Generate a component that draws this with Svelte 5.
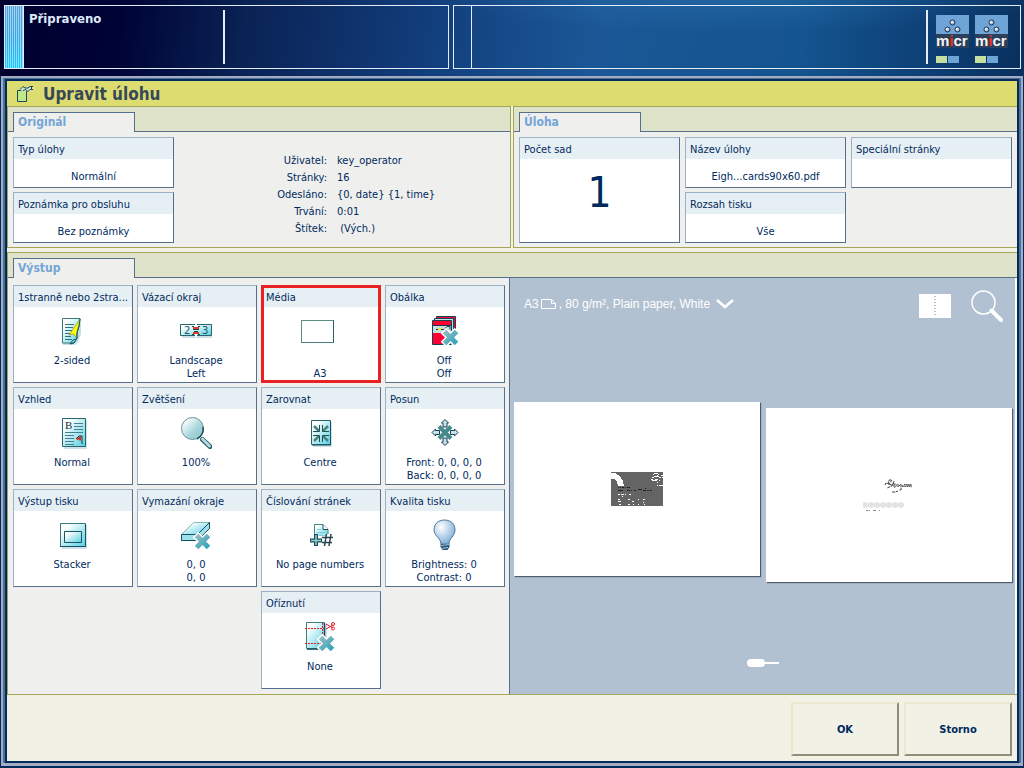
<script>
//     Job data
// =======================
   const details = [
      ["Uživatel:", "key_operator"],
      ["Stránky:", "16"],
      ["Odesláno:", "{0, date} {1, time}"],
      ["Trvání:", "0:01"],
      ["Štítek:", " (Vých.)"],
   ];

   const outputs = [
      { id: "sided", title: "1stranně nebo 2stranně", lines: ["2-sided"] },
      { id: "binding", title: "Vázací okraj", lines: ["Landscape", "Left"] },
      { id: "media", title: "Média", lines: ["", "A3"] },
      { id: "cover", title: "Obálka", lines: ["Off", "Off"] },
      { id: "layout", title: "Vzhled", lines: ["Normal"] },
      { id: "zoom", title: "Zvětšení", lines: ["100%"] },
      { id: "align", title: "Zarovnat", lines: ["Centre"] },
      { id: "shift", title: "Posun", lines: ["Front: 0, 0, 0, 0", "Back: 0, 0, 0, 0"] },
      { id: "stacker", title: "Výstup tisku", lines: ["Stacker"] },
      { id: "erase", title: "Vymazání okraje", lines: ["0, 0", "0, 0"] },
      { id: "numbers", title: "Číslování stránek", lines: ["No page numbers"] },
      { id: "quality", title: "Kvalita tisku", lines: ["Brightness: 0", "Contrast: 0"] },
      { id: "trim", title: "Oříznutí", lines: ["None"] },
   ];

   // the title bar cuts long names after this many characters
   const maxTitle = 19;
   const shorten = (title) => title.length > maxTitle ? title.slice(0, maxTitle) + "..." : title;

   let selected = $state("media");
   let spread = $state(0);
</script>

<!-- the grey-green cross over icons of switched off options -->
{#snippet cross()}
   <path d="M15.500 15.500l14 14M29.500 15.500l-14 14" stroke="#fff" stroke-width="8" />
   <path d="M16.500 16.500l12 12M28.500 16.500l-12 12" stroke="url(#crossFill)" stroke-width="5" />
{/snippet}

{#snippet icon(id)}
   <svg class="icon" viewBox="0 0 32 32" width="32" height="32" fill="none" aria-hidden="true">
      {#if id == "sided"}
         <path d="M7 4h18v15l-3 8-3 3H7z" fill="#c5dfe8" />
         <path d="M6.500 3.500h17.500l-3 15v5l-3 4.500H6.500z" fill="url(#paper)" stroke="#3e7774" />
         <path d="M9 9.500h9M9 12.500h8M9 15.500h7M9 18.500h5M9 21.500h6M9 24.500h7" stroke="#3a6f7c" />
         <path d="M24 4L13 20l4-1 3 3 1-5z" fill="#ff0" stroke="#8e8b28" stroke-width=".7" />
         <path d="M24 4l-1 8-2 6v5l-3 5-4 1 3-4 3-1" stroke="#165b68" />
      {:else if id == "binding"}
         <path d="M2 11h31v12H2z" fill="#cddfe6" />
         <path d="M.5 9.500h31v11H.5z" fill="url(#paper)" stroke="#28646c" />
         <path d="M16 9v2M16 19v3" stroke="#fff" stroke-width="2" />
         <text x="4" y="19" class="digits">2</text>
         <text x="22" y="19" class="digits">3</text>
         <path d="M13 13h6M13 18h6" stroke="#e33828" stroke-width="2" />
         <path d="M12 11.500h2M18 11.500h2M13 14.500h6M14 16.500h4M12 19.500h2M18 19.500h2" stroke="#174b58" />
      {:else if id == "cover"}
         <path d="M8.500 1.500h19v26h-19z" fill="#ff0034" stroke="#124454" />
         <path d="M6.500 3.500h19v24h-19z" fill="#b8e3ea" stroke="#124454" />
         <path d="M4.500 5.500h19v24h-19z" fill="#ff0034" stroke="#124454" />
         <path d="M5 11h18v7H5z" fill="#c8dde0" />
         <path d="M8 14.500h8M17 13.500l2-2h3v3M5 10.500h18" stroke="#153f4a" />
         <path d="M10 14h3" stroke="#f2e726" stroke-width="2" />
         {@render cross()}
      {:else if id == "layout"}
         <path d="M8 3h23v29H8z" fill="#cfe2ea" />
         <path d="M6.500 1.500h23v28h-23z" fill="url(#paper)" stroke="#28646c" />
         <text x="9" y="12" class="serif">B</text>
         <path d="M18 6.500h9M18 9.500h9M18 12.500h9M9 15.500h18M9 18.500h9M9 21.500h9M9 24.500h9M9 27.500h9" stroke="#47818d" />
         <path d="M20 22l3-3h3v8" stroke="#143640" />
         <path d="M21 22.500l3-2v3" stroke="#e22a20" stroke-width="2" />
      {:else if id == "zoom"}
         <circle cx="12.500" cy="11.500" r="11" fill="url(#lens)" stroke="#6b9299" />
         <path d="M17 22a11 11 0 0 0 6-12" stroke="#174b5b" stroke-width="1.500" />
         <path d="M22.500 22.500l7.500 7" stroke="#255f68" stroke-width="5" stroke-linecap="round" />
         <path d="M22.500 22l7 7" stroke="#b6dbdf" stroke-width="3" stroke-linecap="round" />
      {:else if id == "align"}
         <path d="M9 5h19v25H9z" fill="#cfe2ea" />
         <path d="M7.500 3.500h19v24h-19z" fill="url(#paper)" stroke="#28646c" />
         <path d="M26.500 4v24H8" stroke="#15535f" />
         <path d="M10 9l5 5M24 9l-5 5M10 24l5-5M24 24l-5-5" stroke="#4e8477" stroke-width="2.500" />
         <path d="M15.500 8v6.500H9M18.500 8v6.500H25M9 18.500h6.500V25M25 18.500h-6.500V25" stroke="#1b4f5a" />
      {:else if id == "shift"}
         <path d="M11 9.500l12 12M23 9.500l-12 12" stroke="#46898d" stroke-width="4" />
         <path d="M17 2.500l3.500 3.500h-1.500v4h-4v-4h-1.500zM17 28.500l3.500-3.500h-1.500v-4h-4v4h-1.500zM4 15.500l3.500-3.500v1.500h4v4h-4v1.500zM30 15.500l-3.500-3.500v1.500h-4v4h4v1.500z" fill="#c4e2e8" stroke="#193f53" />
      {:else if id == "stacker"}
         <path d="M6 6h25v24H6z" fill="#cfe2ea" />
         <path d="M4.500 4.500h25v23h-25z" fill="url(#paper)" stroke="#3b7776" />
         <path d="M29.500 5v22.500H4" stroke="#155060" />
         <path d="M8.500 12.500h17v11h-17z" fill="url(#paper)" stroke="#1b5362" />
      {:else if id == "erase"}
         <path d="M1.500 15.500l12-12h16v6l-12 12h-16z" fill="#9be0eb" stroke="#3b7776" />
         <path d="M1.500 15.500l12-12h16l-12 12z" fill="url(#paper)" />
         <path d="M1.500 15.500h16l12-12v6l-12 12h-16zM17.500 15.500v6" stroke="#174f5c" />
         {@render cross()}
      {:else if id == "numbers"}
         <path d="M10.500 17V5.500H19l5 5V15" fill="url(#paper)" stroke="#47887f" />
         <path d="M19 5.500v5h5" fill="#fff" stroke="#174f5c" />
         <path d="M13 10.500h4M13 13.500h8M15 16.500h8" stroke="#87cbd6" />
         <path d="M12 15v12M6 21.500h12" stroke="#174f5c" stroke-width="4" />
         <path d="M12 16v10M7 21.500h10" stroke="#9ccdd1" stroke-width="1.500" />
         <path d="M22.500 15l-2 12M27 15l-2 12M18 18.500h11M18 23.500h10" stroke="#28434d" stroke-width="1.500" />
      {:else if id == "quality"}
         <path d="M13 25c0-6-7-8-7-14C6 5 10 1 16.500 1S27 5 27 11c0 6-6 8-6 14z" fill="url(#bulb)" stroke="#52779e" />
         <path d="M12.500 25h9v3l-2 3h-5l-2-3z" fill="#315776" />
         <path d="M13 26.500l8-1M13 29.500l7-1" stroke="#9bc2db" />
      {:else if id == "trim"}
         <path d="M3 3h20v26H3z" fill="#cfe2ea" />
         <path d="M2.500 1.500h18v26h-18z" fill="url(#paper)" stroke="#3c8177" />
         <path d="M20.500 2v26H3" stroke="#155060" stroke-width="1.500" />
         <path d="M1 7.500h19M1 22.500h17M18.500 2v11" stroke="#e41c24" stroke-dasharray="2 1" />
         <path d="M22 3l7 4M22 8l7-4" stroke="#d4243a" />
         <circle cx="29" cy="3" r="1.500" stroke="#e41c24" />
         <circle cx="29" cy="7.500" r="1.500" stroke="#e41c24" />
         {@render cross()}
      {/if}
   </svg>
{/snippet}

{#snippet tab(name)}
   <div class="tabs"><h2>{name}</h2></div>
{/snippet}

{#snippet setting(title, value)}
   <button class="tile">
      <span class="caption">{title}</span>
      <span class="value">{value}</span>
   </button>
{/snippet}

<!-- shared gradients -->
<svg class="defs" width="0" height="0" aria-hidden="true">
   <defs>
      <linearGradient id="paper" x1="0" y1="0" x2="1" y2="1">
         <stop offset=".2" stop-color="#fafefe" />
         <stop offset="1" stop-color="#55cfe2" />
      </linearGradient>
      <linearGradient id="crossFill" gradientUnits="userSpaceOnUse" x1="15" y1="15" x2="29" y2="29">
         <stop offset="0" stop-color="#a2bdc2" />
         <stop offset="1" stop-color="#2ba5b9" />
      </linearGradient>
      <linearGradient id="lens" x1="0" y1="0" x2="1" y2="1">
         <stop offset=".2" stop-color="#f2fafa" />
         <stop offset=".6" stop-color="#a3d4da" />
         <stop offset="1" stop-color="#8fc6ce" />
      </linearGradient>
      <radialGradient id="bulb" cx=".35" cy=".3" r=".8">
         <stop offset="0" stop-color="#fff" />
         <stop offset="1" stop-color="#72a6d2" />
      </radialGradient>
      <radialGradient id="ball" cx=".35" cy=".35" r=".7">
         <stop offset="0" stop-color="#fff" />
         <stop offset="1" stop-color="#8b98a8" />
      </radialGradient>
   </defs>
</svg>

<div class="screen">
   <header class="status">
      <div class="box state">
         <div class="stripes"></div>
         <strong>Připraveno</strong>
         <div class="divider"></div>
      </div>
      <div class="box supplies">
         <div class="slot"></div>
         <div class="divider"></div>
         {#each [1, 2] as n (n)}
            <div class="toner">
               <svg width="33" height="33" viewBox="0 0 33 33">
                  <path d="M0 0h33v33H0z" fill="#6fa4d6" />
                  <path d="M0 19h33v14H0z" fill="#2a405c" />
                  <g fill="url(#ball)" stroke="#123462">
                     <circle cx="16.500" cy="7.500" r="2.500" />
                     <circle cx="11.500" cy="14.500" r="2.500" />
                     <circle cx="21.500" cy="14.500" r="2.500" />
                  </g>
                  <text x="0" y="31" class="micr">m<tspan fill="#ff2a10">i</tspan>cr</text>
               </svg>
               <div class="level"><i></i><i></i></div>
            </div>
         {/each}
      </div>
   </header>

   <div class="frame">
      <main class="window">
         <div class="title">
            <svg width="18" height="18" viewBox="0 0 18 18" fill="none" aria-hidden="true">
               <path d="M1.500 5.500h9v11h-9z" fill="#bfe88c" stroke="#174b5c" />
               <path d="M4 3.500l3-2 2 1h3l2-1 3 1v2l-3 2-2-1-3 1-4-1z" fill="#d5e7c5" />
               <path d="M4 4.500l3-3 2 1.500h3l2-1.500h3M7 5.500l3-1 2 2 2-2h3M15.500 1.500v3" stroke="#17435d" />
            </svg>
            <h1>Upravit úlohu</h1>
         </div>

         <div class="top">
            <section class="panel">
               {@render tab("Originál")}
               <div class="original">
                  <div class="stack">
                     {@render setting("Typ úlohy", "Normální")}
                     {@render setting("Poznámka pro obsluhu", "Bez poznámky")}
                  </div>
                  <dl>
                     {#each details as [name, value] (name)}
                        <dt>{name}</dt>
                        <dd>{value}</dd>
                     {/each}
                  </dl>
               </div>
            </section>

            <section class="panel open">
               {@render tab("Úloha")}
               <div class="job">
                  <button class="tile copies">
                     <span class="caption">Počet sad</span>
                     <span class="value">1</span>
                  </button>
                  {@render setting("Název úlohy", "Eigh...cards90x60.pdf")}
                  {@render setting("Speciální stránky", "")}
                  {@render setting("Rozsah tisku", "Vše")}
               </div>
            </section>
         </div>

         <section class="panel open output">
            {@render tab("Výstup")}
            <div class="outputBody">
               <div class="tiles">
                  {#each outputs as item (item.id)}
                     <button class="tile option {item.id}" class:selected={ selected == item.id } onclick={ () => selected = item.id }>
                        <span class="caption">{shorten(item.title)}</span>
                        {#if item.id == "media"}
                           <span class="icon wide"><span class="sheet"></span></span>
                        {:else}
                           {@render icon(item.id)}
                        {/if}
                        {#each item.lines as line}
                           <span class="line">{line}</span>
                        {/each}
                     </button>
                  {/each}
               </div>

               <div class="preview">
                  <div class="toolbar">
                     <button class="paper">
                        <span>A3</span>
                        <svg width="16" height="12" viewBox="0 0 16 12" fill="none" stroke="#fff">
                           <path d="M.5 1.500h10l4 4v5H.5zM10.500 1.500v4h4" />
                        </svg>
                        <span>, 80 g/m², Plain paper, White</span>
                        <svg width="18" height="12" viewBox="0 0 18 12" fill="none" stroke="#fff" stroke-width="2.500">
                           <path d="M1 2l8 7 8-7" />
                        </svg>
                     </button>
                     <button class="tool" aria-label="Spread">
                        <svg width="32" height="32" viewBox="0 0 32 32">
                           <path d="M0 4h32v24H0z" fill="#fff" />
                           <path d="M16 6v20" stroke="#b1c1d1" stroke-width="2" stroke-dasharray="1 2" />
                        </svg>
                     </button>
                     <button class="tool" aria-label="Zoom">
                        <svg width="32" height="32" viewBox="0 0 32 32" fill="none" stroke="#fff">
                           <circle cx="12.500" cy="12.500" r="11.500" stroke-width="1.500" />
                           <path d="M20.500 20.500l9.500 9.500" stroke-width="4" stroke-linecap="round" />
                        </svg>
                     </button>
                  </div>

                  <div class="pages">
                     <div class="page">
                        <svg width="52" height="36" viewBox="0 0 52 36" shape-rendering="crispEdges">
                           <path d="M0 1h52v34H0z" fill="#646464" />
                           <path d="M0 2h4l5 3 3 5 1 5H7l-1-4-3-3H0z" fill="#fff" />
                           <path d="M43 2.500h4M42 3.500h1M47 3.500h1M43 5.500h5M41 6.500h2M48 6.500h2M40 8.500h2M44 8.500h3M50 4.500h2M51 6.500h1M41 9.500h5M46 11.500h1M46 14.500h1M48 14.500h4M46 4.500h1M48 9.500h1" stroke="#fff" fill="none" />
                           <path d="M7 16.500h1M9 16.500h1M11 16.500h2M14 16.500h1M16 16.500h3M7 19.500h5M16 19.500h3M20 19.500h1M23 19.500h2M27 18.500h4M32 19.500h3M36 19.500h2M39 19.500h2M34 17.500h1" stroke="#222" />
                           <path d="M7 23.500h2M10 23.500h3M14 23.500h1M18 23.500h2M11 25.500h1M7 28.500h2M17 28.500h2M27 28.500h1M7 30.500h3M21 30.500h2M32 28.500h2M8 33.500h2M17 33.500h2M22 33.500h1M27 33.500h1M33 33.500h1M32 31.500h1" stroke="#fff" />
                        </svg>
                     </div>
                     <div class="page back">
                        <svg width="52" height="36" viewBox="0 0 52 36" fill="none">
                           <path d="M22 8l1-2 3 1 3-4h-3l-1 4 4 1 2-2M31 4l-2 5-5 2M30 9c1-3 4-3 3 0s-3 1-1-2M35 7v3l3-3v6h-2M39 8l1 2 2-3v3l2-3v3l2-3v3l2-3v4M29 15h3l3-1" stroke="#444" stroke-dasharray="3 .7" />
                           <g fill="#e3e3e3">
                              {#each [0, 1, 2, 3, 4, 5, 6] as n}
                                 <circle cx={ 2 + n * 6 } cy="28" r="3" />
                              {/each}
                           </g>
                           <path d="M3 33.500h2M6 33.500h1M10 33.500h3M16 33.500h1" stroke="#888" />
                        </svg>
                     </div>
                  </div>

                  <div class="pager">
                     <input type="range" min="0" max="8" aria-label="Pages" bind:value={ spread } />
                  </div>
               </div>
            </div>
         </section>

         <footer>
            <button class="action">OK</button>
            <button class="action">Storno</button>
         </footer>
      </main>
   </div> <!-- end of frame -->
</div>

<style>
   :global(body) {
      margin: 0;
      background: #002b5c;
   }

   .screen {
      box-sizing: border-box;
      min-height: 100vh;
      display: flex;
      flex-direction: column;
      padding-bottom: 2px;
      color: #002a5e;
      font: 11px/13px "DejaVu Sans Condensed", "DejaVu Sans", sans-serif;
   }

   .defs { position: absolute; }

   button {
      font: inherit;
      color: inherit;
      margin: 0;
      padding: 0;
      cursor: pointer;
   }

   h1, h2, dl, dd { margin: 0; }

/* status bar */
   .status {
      box-sizing: border-box;
      height: 76px;
      display: grid;
      grid-template-columns: 445fr 568fr;
      gap: 4px;
      padding: 5px 3px 7px 4px;
      background:
         radial-gradient(ellipse at 72% 0, rgba(60, 140, 200, .25), transparent 30%),
         linear-gradient(98deg, #00002e 0, #000336 12%, #0a2254 24%, #123e7c 42%, #1b5796 58%, #14548f 78%, #0d4076 90%, #09305e 100%);
   }

   .box {
      display: flex;
      border: 1px solid #e4ecf8;
   }

   .state strong {
      flex: 0 0 199px;
      box-sizing: border-box;
      padding: 5px 0 0 5px;
      color: #dfe9fa;
      font-size: 13px;
      line-height: 16px;
   }

   .stripes {
      width: 18px;
      border-right: 1px solid #e4ecf8;
      background:
         repeating-linear-gradient(90deg, transparent 0 1px, rgba(255, 255, 255, .5) 1px 2px),
         linear-gradient(#4fa3dc, #35a8e6 50%, #14c8ff);
   }

   .divider {
      width: 2px;
      margin: 4px 0;
      background: #e4ecf8;
   }

   .supplies { gap: 6px; padding-right: 12px; }
   .supplies .divider { margin-left: auto; margin-right: 2px; }

   .slot {
      width: 17px;
      border-right: 1px solid #e4ecf8;
   }

   .toner { padding-top: 9px; }
   .toner svg { display: block; }

   .micr {
      font: bold 15px "Liberation Sans", sans-serif;
      fill: #f4f4f4;
   }

   .level {
      display: flex;
      gap: 1px;
      margin-top: 8px;
   }

   .level i {
      width: 11px;
      height: 7px;
      background: #6fa4d6;
   }

   .level i:first-child { background: #c4dfa0; }

/* window */
   .frame {
      flex: 1;
      display: flex;
      margin: 0 1px;
      padding: 1px 2px 0;
      border: 2px solid #a3acc2;
      border-bottom-width: 3px;
      background: #4f7096;
   }

   .window {
      flex: 1;
      min-width: 0;
      display: flex;
      flex-direction: column;
      border: 2px solid #002b5c;
      background: #f1f1e5;
   }

   .title {
      display: flex;
      align-items: center;
      gap: 9px;
      height: 25px;
      padding-left: 9px;
      background: #dddc70;
      color: #364858;
   }

   h1 { font-size: 17px; line-height: 24px; }

   .top {
      display: grid;
      grid-template-columns: 504fr 504fr;
      gap: 2px;
      margin-bottom: 4px;
   }

   .panel {
      border: 1px solid #a5a556;
      background: #efefed;
   }

   .panel.open { border-right: 0; }

   .tabs {
      display: flex;
      align-items: flex-end;
      height: 24px;
      padding: 0 5px;
      border-bottom: 1px solid #566f8c;
      background: #dfe3ca;
   }

   h2 {
      box-sizing: border-box;
      width: 122px;
      height: 20px;
      margin-bottom: -1px;
      padding-left: 4px;
      border: 1px solid #566f8c;
      border-bottom: 0;
      background: #efefed;
      color: #74a5d6;
      font-size: 12px;
      line-height: 19px;
   }

   .original, .job { padding: 5px 5px 4px; }
   .original { display: flex; }

   .stack {
      display: grid;
      gap: 4px;
      width: 161px;
   }

   .job {
      display: grid;
      grid-template-columns: repeat(3, 1fr);
      grid-auto-rows: 51px;
      gap: 4px 5px;
   }

   .tile {
      box-sizing: border-box;
      display: flex;
      flex-direction: column;
      align-items: stretch;
      min-width: 0;
      height: 51px;
      border: 1px solid;
      border-color: #9db1c6 #566f8c #566f8c #9db1c6;
      background: #fff;
   }

   .caption {
      flex: none;
      height: 21px;
      padding: 0 4px;
      background: #e6eff3;
      line-height: 23px;
      text-align: left;
      white-space: nowrap;
      overflow: hidden;
   }

   .value {
      flex: 1;
      display: flex;
      align-items: center;
      justify-content: center;
      padding-top: 6px;
   }

   .copies {
      grid-row: span 2;
      height: auto;
   }

   .copies .value {
      padding: 0 0 16px;
      font-size: 42px;
   }

   dl {
      display: grid;
      grid-template-columns: 153px auto;
      grid-auto-rows: 17px;
      column-gap: 10px;
      padding-top: 15px;
      line-height: 17px;
      white-space: pre;
   }

   dt { text-align: right; }

/* output options and preview */
   .output {
      flex: 1;
      display: flex;
      flex-direction: column;
   }

   .outputBody {
      flex: 1;
      display: grid;
      grid-template-columns: auto 1fr;
   }

   .tiles {
      display: grid;
      grid-template-columns: repeat(4, 120px);
      grid-auto-rows: 98px;
      gap: 4px;
      padding: 7px 4px 5px 5px;
   }

   .option { height: 98px; }
   .option.selected { outline: 3px solid #e82222; outline-offset: -3px; }
   .option.trim { grid-column: 3; }

   .icon {
      flex: none;
      align-self: center;
      width: 32px;
      height: 32px;
      margin: 8px 2px 7px 0;
   }

   .icon.wide {
      display: flex;
      align-items: center;
      width: 38px;
   }

   .sheet {
      box-sizing: border-box;
      width: 33px;
      height: 23px;
      border: 1px solid;
      border-color: #5c8f80 #2b5b6b #4d7f85 #5c8f80;
   }

   .line {
      height: 13px;
      margin-right: 2px;
      text-align: center;
   }

   .digits {
      font: 10px "DejaVu Sans", sans-serif;
      fill: #225462;
   }

   .serif {
      font: 11px "Liberation Serif", serif;
      fill: #16303e;
   }

   .preview {
      display: flex;
      flex-direction: column;
      min-width: 0;
      border-left: 1px solid #566f8c;
      border-right: 2px solid #fff;
      background: #b1c1d1;
   }

   .toolbar {
      box-sizing: border-box;
      display: flex;
      align-items: flex-start;
      gap: 20px;
      height: 68px;
      padding: 12px 12px 0 14px;
   }

   .toolbar button {
      border: 0;
      background: none;
   }

   .toolbar .paper {
      display: flex;
      align-items: center;
      gap: 2px;
      margin-right: auto;
      height: 28px;
      color: #fff;
      font: 12px/14px "Liberation Sans", sans-serif;
   }

   .paper svg:last-child { margin-left: 4px; }

   .tool svg { display: block; }

   .pages {
      flex: 1;
      display: grid;
      grid-template-columns: 1fr 1fr;
      align-content: center;
      gap: 6px;
      padding: 0 3px 0 4px;
   }

   .page {
      display: grid;
      place-items: center;
      aspect-ratio: 246 / 174;
      background: #fff;
      box-shadow: 1px 1px 1px #4e5c6c;
   }

   /* the reverse side lies a bit lower */
   .page.back { margin-top: 6px; margin-bottom: -6px; }

   .pager {
      display: flex;
      align-items: center;
      justify-content: center;
      height: 62px;
   }

   input {
      appearance: none;
      width: 32px;
      height: 8px;
      margin: 0;
      background: linear-gradient(#fff, #fff) center / 100% 2px no-repeat;
   }

   input::-webkit-slider-thumb {
      appearance: none;
      width: 18px;
      height: 8px;
      border-radius: 4px;
      background: #fff;
   }

/* buttons at the bottom */
   footer {
      display: flex;
      justify-content: flex-end;
      gap: 5px;
      padding: 7px 5px 5px;
   }

   .action {
      width: 108px;
      height: 54px;
      border: 2px solid;
      border-color: #ece8cf #8f8f79 #8f8f79 #ece8cf;
      background: #f1f1e5;
      font-weight: bold;
   }
</style>
